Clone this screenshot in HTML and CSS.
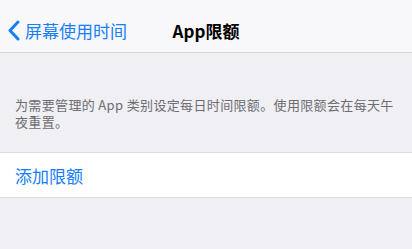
FILE: index.html
```html
<!DOCTYPE html>
<html lang="zh-CN">
<head>
  <meta charset="UTF-8">
  <meta name="viewport" content="width=device-width, initial-scale=1.0">
  <link rel="stylesheet" href="styles.css">
</head>
<body>

  <div class="nav-bar">
    <a class="back-link" href="#">
      <svg class="back-icon" width="13" height="21" viewBox="0 0 13 21">
        <polyline points="11,2 3,10.5 11,19" fill="none" stroke="#147efb" stroke-width="3" stroke-linecap="round" stroke-linejoin="round"/>
      </svg>
      <span>屏幕使用时间</span>
    </a>
    <h1 class="nav-title">App限额</h1>
  </div>

  <p class="section-note">为需要管理的 App 类别设定每日时间限额。使用限额会在每天午夜重置。</p>

  <div class="list-group">
    <a class="list-row" href="#">添加限额</a>
  </div>

</body>
</html>
```

FILE: styles.css
```css
* {
  padding: 0;
  margin: 0;
  box-sizing: border-box;
}

body {
  background-color: #efeff4;
  font-family: "Noto Sans CJK SC", "Noto Sans", sans-serif;
  color: #000;
  height: 100vh;
}

.nav-bar {
  position: relative;
  height: 53px;
  background-color: #f8f8fa;
  border-bottom: 1px solid #d4d4d8;
  display: flex;
  align-items: center;
  padding-top: 8px;
}

.back-link {
  display: flex;
  align-items: center;
  padding-left: 7px;
  color: #147efb;
  text-decoration: none;
  font-size: 17px;
}

.back-icon {
  margin-right: 5px;
}

.nav-title {
  position: absolute; /* centred over the bar, independent of the back link */
  left: 0;
  right: 0;
  top: 8px;
  bottom: 0;
  display: flex;
  align-items: center;
  justify-content: center;
  font-size: 17px;
  font-weight: 600;
  pointer-events: none;
}

.section-note {
  padding: 43px 15px 0 15px;
  font-size: 13px;
  line-height: 17px;
  letter-spacing: 0.35px;
  color: #6d6d72;
}

.list-group {
  margin-top: 22px;
  background-color: #fff;
  border-top: 1px solid #dcdce0;
  border-bottom: 1px solid #dcdce0;
}

.list-row {
  display: flex;
  align-items: center;
  height: 44px;
  padding-left: 15px;
  font-size: 17px;
  color: #147efb;
  text-decoration: none;
}
```
